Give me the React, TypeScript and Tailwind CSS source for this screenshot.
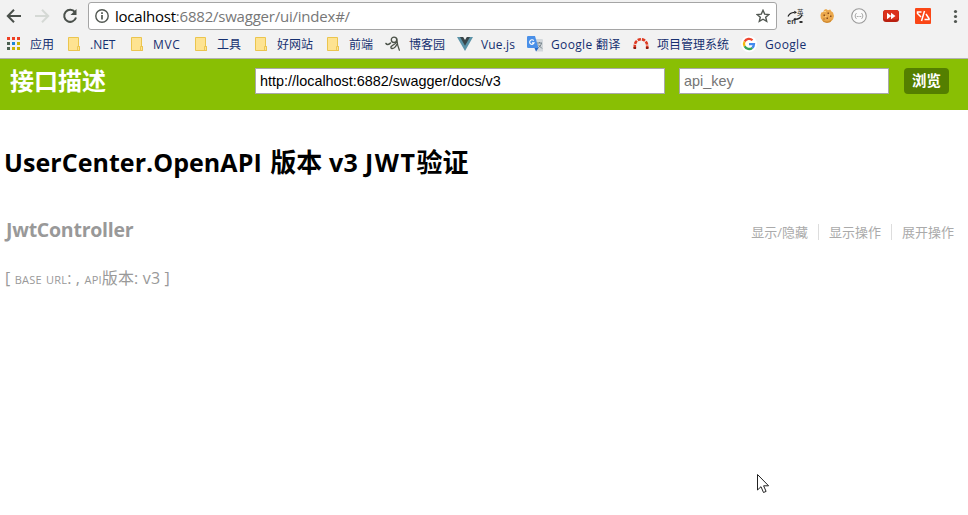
import type { ReactNode } from "react";

const UI = "font-['Open_Sans','Noto_Sans_CJK_SC',sans-serif]";

function Folder() {
  return (
    <svg width="16" height="16" viewBox="0 0 16 16">
      <path d="M2.5 1.5h10v9h1v4h-11z" fill="#fee391" stroke="#ebc54e" />
      <path d="M11.5 14.5v-4h2v4z" fill="#fee391" stroke="#e9c046" strokeWidth=".8" />
    </svg>
  );
}

function Apps() {
  const colors = ["#ee4024", "#ee4024", "#ee4024", "#4c6152", "#1a87d6", "#c8b400", "#4c6152", "#c8b400", "#c8b400"];
  return (
    <svg width="16" height="16" viewBox="0 0 16 16">
      {colors.map((c, i) => (
        <rect key={i} x={1 + (i % 3) * 5} y={1 + Math.floor(i / 3) * 5} width="3" height="3" fill={c} />
      ))}
    </svg>
  );
}

function Cnblogs() {
  return (
    <svg width="16" height="16" viewBox="0 0 16 16" fill="none" stroke="#4b5248" strokeLinecap="round">
      <circle cx="9" cy="3.800" r="2.700" strokeWidth="1.300" />
      <path d="M11.700 2.500c.3 4 1.100 8 2.700 11.700M11.800 8.500c-1.300 2.600-3.300 4.200-5 4-1.400-.3-1.200-2 .2-2.700C8.500 9 10.500 8 11.800 6" strokeWidth="1.300" />
      <path d="M1 7.500c.8 1.300 2.800 1.300 4.500-.5" strokeWidth="1.500" />
    </svg>
  );
}

function Vue() {
  return (
    <svg width="16" height="16" viewBox="0 0 16 16">
      <path d="M0 1h4l4 7 4-7h4L8 15z" fill="#5b93a8" />
      <path d="M3 1h3.200L8 4l1.800-3H13L8 9.800z" fill="#39464a" />
    </svg>
  );
}

function Translate() {
  return (
    <svg width="16" height="16" viewBox="0 0 16 16">
      <path d="M7 3h8.200l.8.800V15.500H9z" fill="#d3d8dc" />
      <path d="M10 7h5M12.500 6v1M14.500 7c-.5 2.500-2 4-4 5M11 8.500l4 4" stroke="#75838a" fill="none" />
      <path d="M.8 0H8l3.500 12H.8L0 11.200V.8z" fill="#4a90e8" />
      <path d="M7.500 12h4L9 15.500z" fill="#2867c4" />
      <path d="M6.800 4.700a2.300 2.300 0 1 0 .3 2.200H5" stroke="#fff" strokeWidth="1.1" fill="none" />
    </svg>
  );
}

function Arc() {
  return (
    <svg width="16" height="16" viewBox="0 0 16 16" fill="none">
      <path d="M1.800 12V9.500A6.200 6.200 0 0 1 14.200 9.500V12" stroke="#df3a22" strokeWidth="2.600" strokeDasharray="3.300 1" />
      <path d="M.5 12h2.600M12.900 12h2.600" stroke="#8f1d12" strokeWidth="2" />
    </svg>
  );
}

function Google() {
  return (
    <svg width="16" height="16" viewBox="0 0 16 16">
      <circle cx="8" cy="8" r="8" fill="#fff" />
      <g fill="none" strokeWidth="2.300">
        <path d="M3.600 5.500A5 5 0 0 1 11.500 4.300" stroke="#ee4630" />
        <path d="M3.600 10.300a5 5 0 0 1 0-4.800" stroke="#f4b912" />
        <path d="M11.300 11.800a5 5 0 0 1-7.700-1.500" stroke="#38a457" />
        <path d="M8 8.100h5a5 5 0 0 1-1.700 3.700" stroke="#4289ef" />
      </g>
    </svg>
  );
}

function Bookmark({ icon, width, text, children }: { icon: ReactNode; width: string; text?: string; children: ReactNode }) {
  return (
    <div className={`flex shrink-0 items-center gap-2 ${width}`}>
      {icon}
      <span className={`mt-px whitespace-nowrap leading-4 ${text ?? ""}`}>{children}</span>
    </div>
  );
}

function Toolbar() {
  return (
    <div className="flex h-8 items-center pl-1.5">
      <svg width="16" height="16" viewBox="0 0 16 16" className="shrink-0" fill="none" stroke="#4a504b" strokeWidth="2">
        <path d="M15 8H2.500M8 1.800L1.800 8 8 14.200" />
      </svg>
      <svg width="16" height="16" viewBox="0 0 16 16" className="ml-3 shrink-0" fill="none" stroke="#d5d9d5" strokeWidth="2">
        <path d="M1 8h12.500M8 1.800L14.200 8 8 14.200" />
      </svg>
      <svg width="16" height="16" viewBox="0 0 16 16" className="ml-3 shrink-0" fill="none" stroke="#4a504b" strokeWidth="2">
        <path d="M13 4.200A6 6 0 1 0 14 9.500" />
        <path d="M14.500 1v6h-6z" fill="#4a504b" stroke="none" />
      </svg>
      <div className="ml-2.5 flex h-7 w-[689px] shrink-0 items-center rounded-[3px] border border-[#a5a5a5] bg-white pr-1.5 pl-1.5">
        <svg width="14" height="14" viewBox="0 0 14 14" fill="none" stroke="#515751">
          <circle cx="7" cy="7" r="6.200" strokeWidth="1.400" />
          <path d="M7 6v4.500M7 3.300v1.600" strokeWidth="1.700" />
        </svg>
        <span className="ml-1.5 flex-1 text-[15px] leading-6 tracking-[-0.22px] text-[#777]">
          <span className="text-black">localhost</span>:6882/swagger/ui/index#/
        </span>
        <svg width="14" height="14" viewBox="0 0 14 14" fill="none" stroke="#515751" strokeWidth="1.400">
          <path d="M7 1.300l1.700 3.800 4.200.4-3.200 2.700 1 4.200L7 10.200l-3.700 2.200 1-4.200L1.100 5.500l4.200-.4z" />
        </svg>
      </div>
      <div className="ml-2.5 flex shrink-0 items-center gap-4">
        <svg width="17" height="18" viewBox="0 0 17 18" className="-mr-px">
          <path d="M1 9.500C2 7 4.500 5.500 7.500 5.300M7 12.300c3.500.2 7-1.300 8-4.800" fill="none" stroke="#222" strokeWidth="1.200" />
          <path d="M7.200 3.800L10 5.300 7.500 7zM8.500 10.800L6 12.300l2.700 1.500z" fill="#222" />
          <text x="0" y="16.500" fontSize="7.500" fontWeight="700" fill="#333" fontFamily="Liberation Sans, sans-serif">en</text>
          <text x="10" y="7.500" fontSize="6.500" fill="#333" fontFamily="Noto Sans CJK SC, sans-serif">英</text>
          <path d="M12.500 14h3v2h-3z" fill="#333" />
        </svg>
        <svg width="16" height="16" viewBox="0 0 16 16">
          <path d="M5 2L7 1l2 1.300 2.200-.8L12.500 3.500l1.500 1L15 8l-1 3.500-3 2.800-3.500.5-3.700-1.500-2-3L1.500 7l.8-2.500 2-.5z" fill="#eba84c" />
          <path d="M3 11c2 3 7 3.500 10 0l-1.500 3-3.500 1-3.500-1z" fill="#d08a30" />
          <path d="M4.500 6.500H6V8H4.500zM8.500 4.500H10V6H8.500zM11 7.500h1.500V9H11zM7.500 9.500H9V11H7.500zM4.500 10.500h1v1h-1z" fill="#8a4d1c" />
          <path d="M5 3.500h2M10 7h1M6 8.500h1.500" stroke="#f9d07c" />
        </svg>
        <svg width="16" height="16" viewBox="0 0 16 16" fill="none" stroke="#999">
          <circle cx="8" cy="8" r="7.300" fill="#fafafa" strokeWidth="1.100" />
          <path d="M5.500 5.500c-1.500 0-.5 2-1.700 2.500 1.200.5.200 2.500 1.700 2.500M10.500 5.500c1.500 0 .5 2 1.700 2.500-1.200.5-.2 2.500-1.700 2.500" />
          <path d="M5.800 8.500h1M7.500 8.500h1M9.200 8.500h1" />
        </svg>
        <svg width="16" height="16" viewBox="0 0 16 16">
          <rect y="2" width="16" height="12" rx="3" fill="#b92010" />
          <rect x=".3" y="2" width="15.400" height="9.500" rx="2.500" fill="#db321c" />
          <path d="M4 4.800l4 3v-3l4.500 3.200L8 11.200v-3l-4 3z" fill="#fff" />
        </svg>
        <svg width="16" height="16" viewBox="0 0 16 16">
          <rect width="16" height="16" rx="1" fill="#fa4616" />
          <path d="M9.500 3L6.500 13M6.500 4H2.500v1.500L6 9M11 6l3 4.500v1H9.500" stroke="#fff" strokeWidth="1.500" fill="none" />
        </svg>
        <svg width="16" height="16" viewBox="0 0 16 16" fill="#515751">
          <circle cx="8.500" cy="3.500" r="1.600" />
          <circle cx="8.500" cy="8.500" r="1.600" />
          <circle cx="8.500" cy="13.500" r="1.600" />
        </svg>
      </div>
    </div>
  );
}

function Bookmarks() {
  return (
    <div className="flex h-[26px] items-center pb-0.5 pl-1.5 text-[12px] text-[#163070]">
      <Bookmark icon={<Apps />} width="w-[60px]">应用</Bookmark>
      <Bookmark icon={<Folder />} width="w-[63px]">.NET</Bookmark>
      <Bookmark icon={<Folder />} width="w-16" text="tracking-[0.6px]">MVC</Bookmark>
      <Bookmark icon={<Folder />} width="w-[60px]">工具</Bookmark>
      <Bookmark icon={<Folder />} width="w-[72px]">好网站</Bookmark>
      <Bookmark icon={<Folder />} width="w-[60px]">前端</Bookmark>
      <Bookmark icon={<Cnblogs />} width="w-[72px]">博客园</Bookmark>
      <Bookmark icon={<Vue />} width="w-[70px]" text="tracking-[0.15px]">Vue.js</Bookmark>
      <Bookmark icon={<Translate />} width="w-[106px]" text="tracking-[0.35px]">Google 翻译</Bookmark>
      <Bookmark icon={<Arc />} width="w-[108px]">项目管理系统</Bookmark>
      <Bookmark icon={<Google />} width="w-[80px]" text="tracking-[0.35px]">Google</Bookmark>
    </div>
  );
}

export default function App() {
  return (
    <div className={`relative h-[515px] w-[968px] overflow-hidden bg-white ${UI}`}>
      <div className="h-[59px] border-b border-[#b3b3b3] bg-[#f2f2f2]">
        <Toolbar />
        <Bookmarks />
      </div>
      <header className="flex h-[51px] items-start bg-[#89bf04] pl-[10px]">
        <h1 className="mt-1.5 w-[245px] text-[24px] leading-8 font-bold text-white">接口描述</h1>
        <div className="mt-[9px] flex h-[26px] w-[410px] items-center border border-[#a9a9a9] bg-white pt-px pl-1 font-['Liberation_Sans',Arial,sans-serif] text-[14.4px] text-black">
          http://localhost:6882/swagger/docs/v3
        </div>
        <div className="mt-[9px] ml-3.5 flex h-[26px] w-[210px] items-center border border-[#a9a9a9] bg-white pt-px pl-1 font-['Liberation_Sans',Arial,sans-serif] text-[14.4px] text-[#757575]">
          api_key
        </div>
        <button className="mt-[9px] ml-[15px] h-[26px] w-[45px] rounded bg-[#547f00] text-[14.4px] leading-[26px] font-bold text-white">浏览</button>
      </header>
      <main className="pr-[14px] pl-[5px]">
        <h2 className="pt-[34px] text-[26px] leading-9 font-bold whitespace-nowrap text-black">
          <span className="-ml-px text-[25px] tracking-[0.05px]">UserCenter.OpenAPI </span>
          <span className="ml-0.5">版本</span>
          <span className="text-[25px] tracking-[0.3px]"> v3 </span>
          <span className="text-[25px] tracking-[1.500px]">JWT</span>验证
        </h2>
        <div className="mt-[36px] flex h-7 items-center justify-between text-[#999]">
          <h3 className="pl-px text-[19.5px] tracking-[-0.25px] font-bold">JwtController</h3>
          <ul className="mt-1 flex text-[13px] leading-4 text-[#aaa]">
            <li className="border-r border-[#ddd] pr-2.5">显示/隐藏</li>
            <li className="border-r border-[#ddd] px-2.5">显示操作</li>
            <li className="pl-2.5">展开操作</li>
          </ul>
        </div>
        <p className="mt-[22px] text-[16px] leading-6 tracking-[0.18px] text-[#999]">
          [ <span className="[font-variant:small-caps]">base url</span>: , <span className="[font-variant:small-caps]">api</span>版本: v3 ]
        </p>
      </main>
      <svg className="absolute top-[474px] left-[757px]" width="13" height="20" viewBox="0 0 13 20">
        <path d="M.5.500v15.500l3.500-3.300 2.500 5.800 2.600-1.100-2.500-5.600h5z" fill="#fff" stroke="#222" />
      </svg>
    </div>
  );
}
